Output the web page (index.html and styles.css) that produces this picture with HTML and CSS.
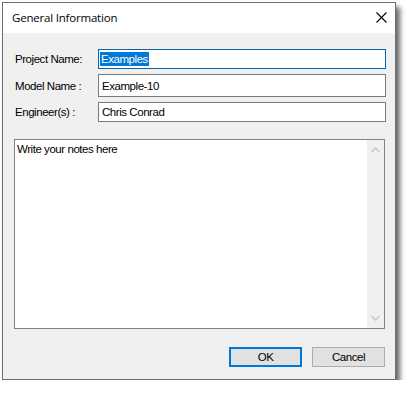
FILE: index.html
```html
<!DOCTYPE html>
<html lang="en">

<head>
    <meta charset="UTF-8">
    <title>General Information</title>
    <link rel="stylesheet" href="styles.css">
</head>

<body>

    <div class="dialog">
        <!-- Barra de título -->
        <div class="title-bar">
            <span class="title">General Information</span>
            <svg class="close" width="11" height="11" viewBox="0 0 11 11">
                <path d="M0.5 0.5 L10.5 10.5 M10.5 0.5 L0.5 10.5" stroke="#000" stroke-width="1.1" fill="none"/>
            </svg>
        </div>

        <div class="content">
            <!-- Campos -->
            <div class="fields">
                <label class="label">Project Name:</label>
                <div class="field field-focus"><span class="selected">Examples</span></div>

                <label class="label">Model Name :</label>
                <div class="field field-tall">Example-10</div>

                <label class="label">Engineer(s) :</label>
                <div class="field">Chris Conrad</div>
            </div>

            <!-- Notas -->
            <div class="notes">
                <div class="notes-text">Write your notes here</div>
                <div class="scrollbar">
                    <svg width="9" height="6" viewBox="0 0 9 6">
                        <path d="M0.5 5 L4.5 1 L8.5 5" stroke="#c4c4c4" stroke-width="1.3" fill="none"/>
                    </svg>
                    <svg width="9" height="6" viewBox="0 0 9 6">
                        <path d="M0.5 1 L4.5 5 L8.5 1" stroke="#c4c4c4" stroke-width="1.3" fill="none"/>
                    </svg>
                </div>
            </div>

            <!-- Botones -->
            <div class="buttons">
                <button class="btn btn-default">OK</button>
                <button class="btn">Cancel</button>
            </div>
        </div>
    </div>

</body>

</html>
```

FILE: styles.css
```css
/* Estilos generales */
body {
    margin: 0;
    padding: 2px 0 0 2px;
    background-color: #ffffff;
    font-family: "Liberation Sans", Arial, sans-serif;
    font-size: 11.5px;
    letter-spacing: -0.45px;
    color: #000;
}

/* Ventana */
.dialog {
    width: 394px;
    height: 378px;
    box-sizing: border-box;
    border: 1px solid #6f6f6f;
    background-color: #f0f0f0;
    box-shadow: 4px 5px 5px rgba(0, 0, 0, 0.6);
    display: flex;
    flex-direction: column;
}

.title-bar {
    height: 30px;
    background-color: #ffffff;
    display: flex;
    align-items: center;
    justify-content: space-between;
    padding: 0 8px 0 9px;
}

.title {
    font-family: "Open Sans", sans-serif;
    font-size: 11.5px;
    letter-spacing: -0.2px;
    color: #000;
    padding-bottom: 1px;
}

.close {
    margin-top: -2px;
}

.content {
    padding: 16px 10px 12px 11px;
    display: flex;
    flex-direction: column;
}

/* Campos */
.fields {
    display: grid;
    grid-template-columns: 84px 288px;
    row-gap: 5px;
    align-items: center;
}

.label {
    padding-left: 1px;
}

.field {
    height: 20px;
    box-sizing: border-box;
    border: 1px solid #7a7a7a;
    background-color: #ffffff;
    padding: 0 0 0 3px;
    display: flex;
    align-items: center;
}

.field-tall {
    height: 23px;
}

.field-focus {
    border-color: #0a64ad;
    padding-left: 1px;
}

.selected {
    background-color: #0078d7;
    color: #ffffff;
    padding: 1px 1px 1px 1px;
}

/* Notas */
.notes {
    margin-top: 17px;
    width: 371px;
    height: 190px;
    box-sizing: border-box;
    border: 1px solid #828282;
    background-color: #ffffff;
    display: flex;
}

.notes-text {
    flex: 1;
    padding: 3px 0 0 2px;
}

.scrollbar {
    width: 17px;
    background-color: #f0f0f0;
    display: flex;
    flex-direction: column;
    justify-content: space-between;
    align-items: center;
    padding: 7px 0 7px;
}

/* Botones */
.buttons {
    margin-top: 18px;
    display: flex;
    justify-content: flex-end;
    gap: 10px;
}

.btn {
    width: 73px;
    height: 20px;
    box-sizing: border-box;
    background-color: #e1e1e1;
    border: 1px solid #adadad;
    font-family: "Liberation Sans", Arial, sans-serif;
    font-size: 11.5px;
    letter-spacing: -0.45px;
    color: #000;
    padding: 0;
    margin: 0;
}

.btn-default {
    border: 2px solid #0078d7;
}
```
